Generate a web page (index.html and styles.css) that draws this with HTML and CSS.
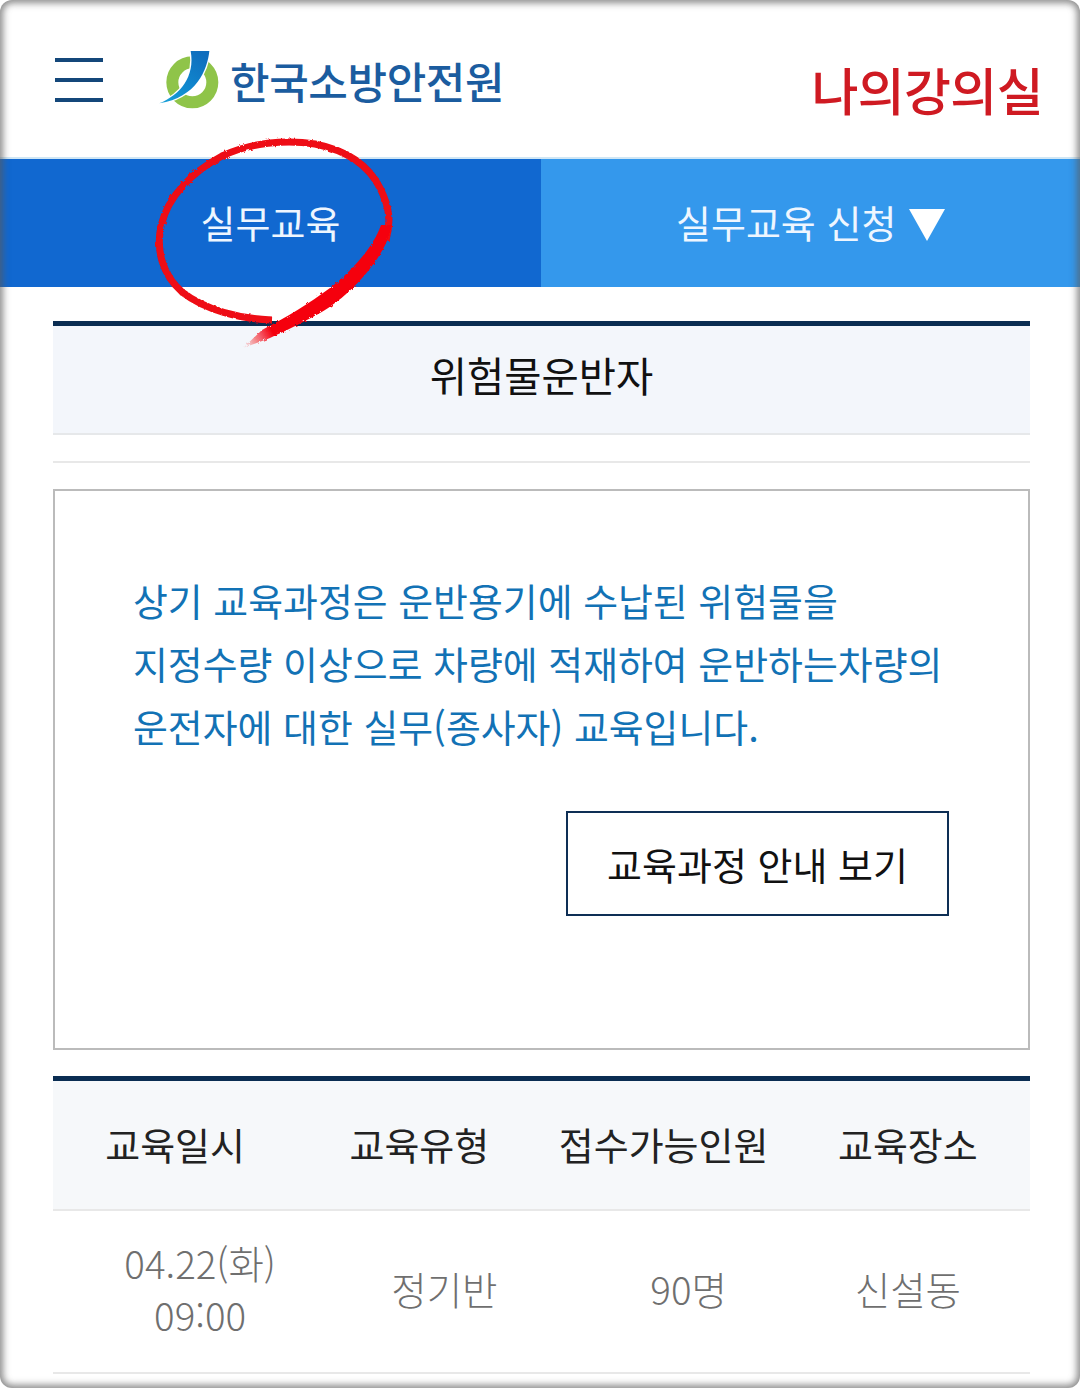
FILE: index.html
```html
<!DOCTYPE html>
<html lang="ko">
<head>
  <meta charset="UTF-8" />
  <meta name="viewport" content="width=device-width, initial-scale=1.0"/>
  <title>실무교육</title>
  <link rel="stylesheet" href="styles.css">
</head>
<body>
  <div class="screen">
    <header class="top">
      <div class="burger"><span></span><span></span><span></span></div>
      <svg class="logo-mark" viewBox="0 0 240 240" aria-hidden="true">
        <defs>
          <linearGradient id="swoosh" x1="0.8" y1="0" x2="0.1" y2="1">
            <stop offset="0" stop-color="#0f6dbd"/>
            <stop offset="0.6" stop-color="#1089cf"/>
            <stop offset="1" stop-color="#19a0d8"/>
          </linearGradient>
        </defs>
        <circle cx="127" cy="127" r="60" fill="none" stroke="#8fc449" stroke-width="36"/>
        <path d="M122 33 L178 33 C172 90 140 172 28 190 C90 165 136 110 122 33 Z" fill="#fff" stroke="#fff" stroke-width="8"/>
        <path d="M122 33 L178 33 C172 90 140 172 28 190 C90 165 136 110 122 33 Z" fill="url(#swoosh)"/>
      </svg>
      <div class="logo-text">한국소방안전원</div>
      <div class="my-room">나의강의실</div>
    </header>

    <nav class="tabs">
      <div class="tab tab-on">실무교육</div>
      <div class="tab tab-apply">실무교육 신청 <span class="arrow"></span></div>
    </nav>

    <main class="content">
      <h2 class="course-title">위험물운반자</h2>
      <div class="thin-line"></div>

      <section class="info">
        <p>상기 교육과정은 운반용기에 수납된 위험물을<br>지정수량 이상으로 차량에 적재하여 운반하는차량의<br>운전자에 대한 실무(종사자) 교육입니다.</p>
        <a class="guide-btn">교육과정 안내 보기</a>
      </section>

      <section class="table">
        <div class="row head">
          <div>교육일시</div>
          <div>교육유형</div>
          <div>접수가능인원</div>
          <div>교육장소</div>
        </div>
        <div class="row body-row">
          <div class="shift">04.22(화)<br>09:00</div>
          <div class="shift">정기반</div>
          <div class="shift">90명</div>
          <div>신설동</div>
        </div>
      </section>
    </main>

    <svg class="scribble" viewBox="0 0 1080 1388" aria-hidden="true">
      <defs>
        <filter id="rough" x="-10%" y="-10%" width="120%" height="120%">
          <feTurbulence type="fractalNoise" baseFrequency="0.35" numOctaves="2" seed="4"/>
          <feDisplacementMap in="SourceGraphic" scale="3"/>
        </filter>
        <linearGradient id="tail" gradientUnits="userSpaceOnUse" x1="243" y1="348" x2="285" y2="325">
          <stop offset="0" stop-color="#f5060c" stop-opacity="0"/>
          <stop offset="0.7" stop-color="#f5060c"/>
        </linearGradient>
      </defs>
      <g filter="url(#rough)">
        <path d="M272 320 C240 319 205 310 182 292 C162 274 156 250 161 226 C168 196 192 172 222 156 C250 143 285 139 315 144 C345 150 368 164 380 188 C390 208 391 222 386 240" fill="none" stroke="#ee0a12" stroke-width="7"/>
        <path d="M392 225 C387 255 352 295 320 313 C300 324 285 331 270 338 L243 348 L262 330 C285 318 310 303 330 288 C350 272 372 250 381 225 Z" fill="url(#tail)"/>
      </g>
    </svg>
  </div>
</body>
</html>
```

FILE: styles.css
```css
* {
  box-sizing: border-box;
}
body {
  margin: 0;
  padding: 0;
  background: #fff;
  font-family: "Noto Sans CJK KR", "Noto Sans", sans-serif;
}
.screen {
  position: relative;
  width: 1080px;
  height: 1388px;
  overflow: hidden;
  background: #fff;
}
.screen::after {
  content: "";
  position: absolute;
  top: 0; left: 0;
  width: 100%; height: 100%;
  border-radius: 12px;
  box-shadow: inset 0 0 7px 3px rgba(90,90,90,0.7), 0 0 0 6px #fff;
  pointer-events: none;
}
.top {
  display: flex;
  align-items: center;
  height: 157px;
  padding: 3px 37px 0 55px;
}
.burger {
  display: flex;
  flex-direction: column;
  gap: 16px;
  width: 48px;
  margin-right: 47px;
}
.burger span {
  display: block;
  height: 4px;
  background: #14477a;
}
.logo-mark {
  width: 80px;
  height: 80px;
  flex: none;
}
.logo-text {
  font-size: 43px;
  font-weight: 500;
  letter-spacing: -0.4px;
  line-height: 1;
  color: #1b5c9f;
}
.my-room {
  margin-left: auto;
  padding-top: 19px;
  font-size: 51px;
  font-weight: 500;
  letter-spacing: -0.6px;
  line-height: 1;
  color: #cf1a22;
}
.tabs {
  display: flex;
  height: 130px;
  border-top: 2px solid #cfe6f5;
}
.tab {
  display: flex;
  align-items: center;
  justify-content: center;
  padding-bottom: 4px;
  font-size: 38px;
  font-weight: 400;
  color: #eef6ff;
}
.tab-on {
  width: 541px;
  background: #1168d0;
}
.tab-apply {
  flex: 1;
  background: #3498ec;
  white-space: pre;
}
.arrow {
  width: 0;
  height: 0;
  margin-top: 8px;
  margin-left: 2px;
  border-left: 18px solid transparent;
  border-right: 18px solid transparent;
  border-top: 32px solid #fff;
}
.content {
  margin: 34px 50px 0 53px;
}
.course-title {
  margin: 0;
  height: 114px;
  padding-bottom: 4px;
  border-top: 5px solid #0a2d52;
  border-bottom: 2px solid #e6e8ea;
  background: #f3f6fb;
  font-size: 40.5px;
  font-weight: 400;
  line-height: 98px;
  text-align: center;
  color: #111;
}
.thin-line {
  height: 2px;
  margin-top: 26px;
  background: #e8e8e8;
}
.info {
  display: flex;
  flex-direction: column;
  height: 561px;
  margin-top: 26px;
  padding: 77px 79px 0 78px;
  border: 2px solid #bbb;
}
.info p {
  margin: 0;
  font-size: 37.9px;
  font-weight: 400;
  line-height: 63px;
  white-space: nowrap;
  color: #1272b5;
}
.guide-btn {
  display: flex;
  align-items: center;
  justify-content: center;
  align-self: flex-end;
  width: 383px;
  height: 105px;
  margin-top: 54px;
  border: 2px solid #0e2f55;
  font-size: 38px;
  color: #111;
}
.table {
  margin-top: 26px;
  border-top: 5px solid #0a2d52;
}
.row {
  display: grid;
  grid-template-columns: repeat(4, 1fr);
  align-items: center;
  text-align: center;
}
.head {
  height: 130px;
  padding-bottom: 4px;
  border-bottom: 2px solid #e8e8e8;
  background: #f6f8fa;
  font-size: 38px;
  color: #222;
}
.body-row {
  height: 163px;
  padding-bottom: 8px;
  border-bottom: 2px solid #e8e8e8;
  font-size: 38.5px;
  font-weight: 300;
  line-height: 52px;
  color: #6f6f6f;
}
.shift {
  padding-left: 50px;
}
.scribble {
  position: absolute;
  top: 0;
  left: 0;
  width: 1080px;
  height: 1388px;
  pointer-events: none;
}
```
